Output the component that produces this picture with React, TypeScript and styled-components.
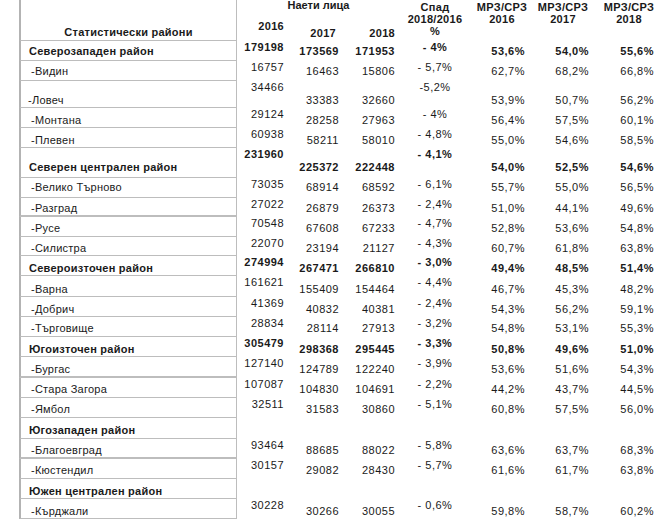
import React from "react";
import styled, { createGlobalStyle } from "styled-components";

const Global = createGlobalStyle`
  html, body { margin: 0; padding: 0; background: #ffffff; }
  body { font-family: "Liberation Sans", Arial, sans-serif; color: #1a1a1a; }
`;

const COLS = "218px 49px 54px 56px 78px 56px 64px 70px";
const LINE = "#bdbdbd";

const Page = styled.div`
  width: 664px;
  height: 524px;
  padding-left: 19px;
  box-sizing: border-box;
  overflow: hidden;
`;

const Row = styled.div<{ $h: number }>`
  display: grid;
  grid-template-columns: ${COLS};
  height: ${(p) => p.$h}px;
  font-size: 11px;
  line-height: 13px;
`;

const Label = styled.div<{ $bold?: boolean; $line: number; $indent: number; $center?: boolean; $pb: number }>`
  border-left: 2px solid #b3b3b3;
  border-right: 1px solid ${LINE};
  border-bottom: ${(p) => p.$line}px solid ${LINE};
  display: flex;
  align-items: flex-end;
  justify-content: ${(p) => (p.$center ? "center" : "flex-start")};
  padding: 0 0 ${(p) => p.$pb}px ${(p) => p.$indent}px;
  font-weight: ${(p) => (p.$bold ? 700 : 400)};
  letter-spacing: 0.25px;
  white-space: nowrap;
`;

const Cell = styled.div<{
  $line: number;
  $top: boolean;
  $bold?: boolean;
  $justify: "flex-end" | "center";
  $pr?: number;
  $pb: number;
}>`
  display: flex;
  align-items: ${(p) => (p.$top ? "flex-start" : "flex-end")};
  justify-content: ${(p) => p.$justify};
  border-bottom: ${(p) => p.$line}px solid transparent;
  padding-bottom: ${(p) => (p.$top ? 0 : p.$pb)}px;
  padding-right: ${(p) => p.$pr ?? 0}px;
  line-height: ${(p) => (p.$top ? 12 : 13)}px;
  font-weight: ${(p) => (p.$bold ? 700 : 400)};
  letter-spacing: 0.5px;
  white-space: nowrap;
`;

const Header = styled.div`
  display: grid;
  grid-template-columns: ${COLS};
  height: 41px;
  font-size: 11px;
  font-weight: 700;
  line-height: 12px;
`;

const Group = styled.div`
  grid-column: span 3;
  display: grid;
  grid-template-columns: 49px 54px 56px;
  grid-template-rows: auto 1fr;
`;

const GroupTitle = styled.div`
  grid-column: span 3;
  text-align: center;
  padding-left: 4px;
  line-height: 11px;
`;

const Year = styled.div<{ $up?: boolean; $pr: number }>`
  align-self: end;
  text-align: right;
  padding-right: ${(p) => p.$pr}px;
  padding-bottom: ${(p) => (p.$up ? 9 : 2)}px;
  letter-spacing: 0.3px;
`;

const Stack = styled.div<{ $shift?: number }>`
  display: flex;
  flex-direction: column;
  align-items: center;
  padding-top: 1px;
  padding-left: ${(p) => p.$shift ?? 0}px;
  letter-spacing: 0.3px;
`;

type RowData = {
  name: string;
  bold?: boolean;
  h: number;
  line?: number;
  indent?: number;
  pb?: number;
  v?: string[];
};

const rows: RowData[] = [
  { name: "Северозападен район", bold: true, h: 20, pb: 2, v: ["179198", "173569", "171953", "- 4%", "53,6%", "54,0%", "55,6%"] },
  { name: "-Видин", h: 20, pb: 2, v: ["16757", "16463", "15806", "- 5,7%", "62,7%", "68,2%", "66,8%"] },
  { name: "-Ловеч", h: 27, indent: 7, v: ["34466", "33383", "32660", "-5,2%", "53,9%", "50,7%", "56,2%"] },
  { name: "-Монтана", h: 20, v: ["29124", "28258", "27963", "- 4%", "56,4%", "57,5%", "60,1%"] },
  { name: "-Плевен", h: 20, v: ["60938", "58211", "58010", "- 4,8%", "55,0%", "54,6%", "58,5%"] },
  { name: "Северен централен район", bold: true, h: 30, pb: 3, v: ["231960", "225372", "222448", "- 4,1%", "54,0%", "52,5%", "54,6%"] },
  { name: "-Велико Търново", h: 20, pb: 3, v: ["73035", "68914", "68592", "- 6,1%", "55,7%", "55,0%", "56,5%"] },
  { name: "-Разград", h: 19, line: 2, v: ["27022", "26879", "26373", "- 2,4%", "51,0%", "44,1%", "49,6%"] },
  { name: "-Русе", h: 20, pb: 1, v: ["70548", "67608", "67233", "- 4,7%", "52,8%", "53,6%", "54,8%"] },
  { name: "-Силистра", h: 19, v: ["22070", "23194", "21127", "- 4,3%", "60,7%", "61,8%", "63,8%"] },
  { name: "Североизточен район", bold: true, h: 20, v: ["274994", "267471", "266810", "- 3,0%", "49,4%", "48,5%", "51,4%"] },
  { name: "-Варна", h: 21, v: ["161621", "155409", "154464", "- 4,4%", "46,7%", "45,3%", "48,2%"] },
  { name: "-Добрич", h: 20, v: ["41369", "40832", "40381", "- 2,4%", "54,3%", "56,2%", "59,1%"] },
  { name: "-Търговище", h: 20, pb: 1, v: ["28834", "28114", "27913", "- 3,2%", "54,8%", "53,1%", "55,3%"] },
  { name: "Югоизточен район", bold: true, h: 20, v: ["305479", "298368", "295445", "- 3,3%", "50,8%", "49,6%", "51,0%"] },
  { name: "-Бургас", h: 21, line: 2, v: ["127140", "124789", "122240", "- 3,9%", "53,6%", "51,6%", "54,3%"] },
  { name: "-Стара Загора", h: 20, pb: 1, v: ["107087", "104830", "104691", "- 2,2%", "44,2%", "43,7%", "44,5%"] },
  { name: "-Ямбол", h: 20, pb: 1, v: ["32511", "31583", "30860", "- 5,1%", "60,8%", "57,5%", "56,0%"] },
  { name: "Югозападен район", bold: true, h: 21, pb: 1 },
  { name: "-Благоевград", h: 20, line: 2, v: ["93464", "88685", "88022", "- 5,8%", "63,6%", "63,7%", "68,3%"] },
  { name: "-Кюстендил", h: 20, pb: 1, v: ["30157", "29082", "28430", "- 5,7%", "61,6%", "61,7%", "63,8%"] },
  { name: "Южен централен район", bold: true, h: 20 },
  { name: "-Кърджали", h: 20, v: ["30228", "30266", "30055", "- 0,6%", "59,8%", "58,7%", "60,2%"] },
];

// right padding for each value column
const colPad = [2, 1, 1, 0, 5, 5, 10];

const DataRow: React.FC<{ r: RowData }> = ({ r }) => {
  const line = r.line ?? 1;
  const pb = r.pb ?? 0;
  return (
    <Row $h={r.h}>
      <Label $bold={r.bold} $line={line} $pb={pb} $indent={r.indent ?? (r.bold ? 8 : 10)}>
        {r.name}
      </Label>
      {r.v
        ? r.v.map((val, i) => (
            <Cell
              key={i}
              $line={line}
              $pb={pb}
              $top={i === 0 || i === 3}
              $bold={r.bold}
              $justify={i === 3 ? "center" : "flex-end"}
              $pr={colPad[i]}
            >
              {val}
            </Cell>
          ))
        : null}
    </Row>
  );
};

export default function App() {
  return (
    <Page>
      <Global />
      <Header>
        <Label $bold $line={1} $pb={2} $indent={0} $center>
          Статистически райони
        </Label>
        <Group>
          <GroupTitle>Наети лица</GroupTitle>
          <Year $up $pr={2}>2016</Year>
          <Year $pr={4}>2017</Year>
          <Year $pr={1}>2018</Year>
        </Group>
        <Stack>
          <span>Спад</span>
          <span>2018/2016</span>
          <span>%</span>
        </Stack>
        <Stack>
          <span>МРЗ/СРЗ</span>
          <span>2016</span>
        </Stack>
        <Stack $shift={2}>
          <span>МРЗ/СРЗ</span>
          <span>2017</span>
        </Stack>
        <Stack>
          <span>МРЗ/СРЗ</span>
          <span>2018</span>
        </Stack>
      </Header>
      {rows.map((r) => (
        <DataRow key={r.name} r={r} />
      ))}
    </Page>
  );
}
